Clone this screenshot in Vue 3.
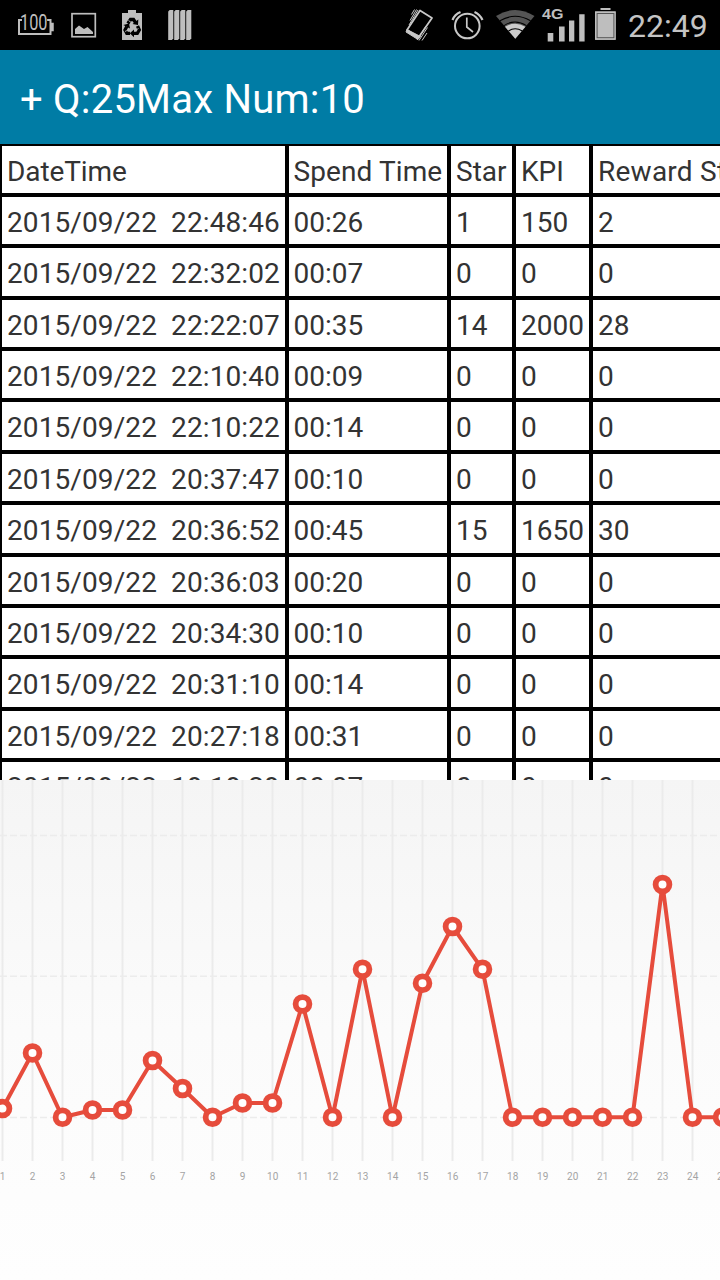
<script setup>
const headers = ['DateTime', 'Spend Time', 'Star', 'KPI', 'Reward Star']
const rows = [
  ['2015/09/22  22:48:46', '00:26', '1', '150', '2'],
  ['2015/09/22  22:32:02', '00:07', '0', '0', '0'],
  ['2015/09/22  22:22:07', '00:35', '14', '2000', '28'],
  ['2015/09/22  22:10:40', '00:09', '0', '0', '0'],
  ['2015/09/22  22:10:22', '00:14', '0', '0', '0'],
  ['2015/09/22  20:37:47', '00:10', '0', '0', '0'],
  ['2015/09/22  20:36:52', '00:45', '15', '1650', '30'],
  ['2015/09/22  20:36:03', '00:20', '0', '0', '0'],
  ['2015/09/22  20:34:30', '00:10', '0', '0', '0'],
  ['2015/09/22  20:31:10', '00:14', '0', '0', '0'],
  ['2015/09/22  20:27:18', '00:31', '0', '0', '0'],
  ['2015/09/22  19:19:29', '00:07', '0', '0', '0'],
]
const levels = [328.5, 273, 337.3, 330, 330, 280.5, 308.5, 337.3, 323, 323, 224, 337.3, 189.3, 337.3, 203.3, 146.5, 189.3, 337.3, 337.3, 337.3, 337.3, 337.3, 104.5, 337.3, 337.3]
const points = levels.map((y, i) => ({ x: 2.5 + i * 30, y, label: i + 1 }))
const line = points.map((p) => `${p.x},${p.y}`).join(' ')
</script>

<template>
  <div class="screen">
    <header class="status">
      <svg class="icons" width="610" height="50" viewBox="0 0 610 50">
        <g fill="none" stroke="#bebebe">
          <path d="M22 20H19V34H50.5V20H47" stroke-width="2" />
          <path d="M51 23.5h2v7h-2" stroke-width="1.5" fill="#bebebe" />
        </g>
        <text x="20" y="30" class="hundred" textLength="27.5" lengthAdjust="spacingAndGlyphs">100</text>
        <rect x="72" y="13.7" width="23.3" height="23" fill="none" stroke="#bebebe" stroke-width="1.7" />
        <path d="M75 34V29L79 25.5 84 29 87.5 27 93 32V34Z" fill="#bebebe" />
        <path d="M122 13H128V10H136V13H142V40H122Z" fill="#bebebe" />
        <g fill="none" stroke="#000" stroke-width="3.3">
          <path d="M127.8 23.5 130.5 19.5H133.5L135.5 22.5" />
          <path d="M137.5 26 139.3 30 137.3 33.3H133" />
          <path d="M130 33.3H126.8L125 30 126.8 26.5" />
        </g>
        <path d="M132.5 24 138 25 138.3 19.5ZM134 29.5V37.3L129.8 33.3ZM123.3 25 129 23.6 130 28.5Z" fill="#000" />
        <path d="M128.5 20.5 131 22.3M138.5 28.5 135.8 30M125 31.5 128 30" stroke="#bebebe" stroke-width=".9" />
        <g fill="#bebebe">
          <path v-for="n in 4" :key="n" :d="`M${162.2 + n * 6} 11.5l1.5-1.5h3.6V38.5l-1.4 1.5h-3.7Z`" />
        </g>
        <g fill="none" stroke="#c8c8c8" stroke-linejoin="round">
          <path d="M420 10.5 432 18 418.5 37.5 407 30Z" stroke-width="1.8" />
          <path d="M407 29.5 420.5 36.5 418 39.5 406 32Z" fill="#c8c8c8" stroke-width="1" />
          <path d="M410 20.5 416.5 9.5M411.5 14.5 414.5 9.5M409 25 418 10M419 40.5 427.5 27.5M422 40.5 427 33M417 40 426 26" stroke-width="1" />
        </g>
        <g fill="none" stroke="#c8c8c8">
          <circle cx="467.3" cy="26" r="12.3" stroke-width="2" />
          <path d="M466.8 17.5V27L473 32" stroke-width="1.7" />
          <path d="M452.5 20Q454.5 14.5 460.5 12M474.5 12Q480 14.5 482.5 20" stroke-width="2.2" />
        </g>
        <path d="M496 16Q515 4 534.5 16L515.3 38.8Z" fill="#555" />
        <path d="M505 26.8Q515 20.8 525.4 26.8L515.3 38.8Z" fill="#ccc" />
        <g fill="none" stroke="#000" stroke-width="1.1">
          <path d="M500 20.8Q515 11.8 530.5 20.8M504 25.6Q515 18.4 526.5 25.6M508.5 31Q515 26.4 522.3 31" />
        </g>
        <text x="542" y="19" class="net" textLength="21.5" lengthAdjust="spacingAndGlyphs">4G</text>
        <g fill="#bebebe">
          <path d="M547.7 33H553.3V41.5H547.7ZM559 26.5H564.6V41.5H559ZM569 20.5H574.3V41.5H569ZM579.2 14.3H584.6V41.5H579.2Z" />
          <path d="M600.5 8H610.5V10H600.5Z" />
        </g>
        <rect x="595.5" y="11.8" width="19.8" height="27.6" fill="#bebebe" stroke="#bebebe" stroke-width="1" />
        <rect x="597.1" y="13.5" width="16.8" height="24.2" fill="none" stroke="#555" stroke-width="1" />
      </svg>
      <span class="clock">22:49</span>
    </header>
    <div class="title">+ Q:25Max Num:10</div>
    <div class="table-view">
      <div class="row head">
        <div v-for="h in headers" :key="h" class="cell">{{ h }}</div>
      </div>
      <div v-for="(row, r) in rows" :key="r" class="row">
        <div v-for="(c, i) in row" :key="i" class="cell">{{ c }}</div>
      </div>
    </div>
    <div class="chart">
      <svg width="720" height="500" viewBox="0 0 720 500">
        <path v-for="p in points" :key="'v' + p.label" :d="`M${p.x} 0V381`" class="vline" />
        <path v-for="y in [55.5, 196.3, 337.5]" :key="y" :d="`M0 ${y}H720`" class="hline" />
        <polyline :points="line" class="series" />
        <circle v-for="p in points" :key="'c' + p.label" :cx="p.x" :cy="p.y" r="6.9" class="dot" />
        <text v-for="p in points" :key="'t' + p.label" :x="p.x + 0.2" y="399.6" class="tick">{{ p.label }}</text>
      </svg>
    </div>
  </div>
</template>

<style scoped>
.screen {
  width: 720px;
  height: 1280px;
  overflow: hidden;
  display: flex;
  flex-direction: column;
  background: #fff;
  font-family: Roboto, "Liberation Sans", sans-serif;
}
.status {
  height: 50px;
  flex: none;
  display: flex;
  background: #000;
}
.icons {
  flex: none;
  overflow: visible;
}
.hundred {
  font-size: 22px;
  fill: #bebebe;
  stroke: #000;
  stroke-width: 1.2px;
  paint-order: stroke;
}
.net {
  font: bold 15px "Liberation Sans", sans-serif;
  fill: #bebebe;
}
.clock {
  padding-left: 18px;
  font-size: 32px;
  line-height: 52px;
  color: #c4c4c4;
}
.title {
  height: 94px;
  flex: none;
  box-sizing: border-box;
  padding-left: 20px;
  background: #007ca5;
  color: #fff;
  font-size: 40px;
  line-height: 100px;
  letter-spacing: 0.22px;
  white-space: pre;
}
.table-view {
  height: 636px;
  flex: none;
  overflow: hidden;
  background: #fff;
}
.row {
  display: grid;
  grid-template-columns: 287px 162px 65px 77px 180px;
  height: 51.36px;
}
.row.head {
  height: 51px;
}
.cell {
  box-sizing: border-box;
  border: 2px solid #000;
  padding-left: 5px;
  color: #333;
  font-size: 28px;
  line-height: 52px;
  white-space: pre;
  overflow: hidden;
}
.cell:first-child {
  letter-spacing: 0.1px;
}
.row.head .cell:first-child {
  letter-spacing: -0.1px;
}
.cell:nth-child(2) {
  padding-left: 4.5px;
}
.row.head .cell:nth-child(2) {
  letter-spacing: 0.1px;
}
.row.head .cell:last-child {
  letter-spacing: 0.25px;
}
.chart {
  height: 500px;
  flex: none;
  background: linear-gradient(#f5f5f5, #fbfbfb 50%, #fefefe);
}
.chart svg {
  display: block;
}
.vline {
  stroke: #ebebeb;
  stroke-width: 2;
}
.hline {
  stroke: #ececec;
  stroke-width: 1.5;
  stroke-dasharray: 7 3;
}
.series {
  fill: none;
  stroke: #e64c3c;
  stroke-width: 4;
  stroke-linejoin: round;
}
.dot {
  fill: #fff;
  stroke: #e64c3c;
  stroke-width: 5.8;
}
.tick {
  font-size: 10px;
  letter-spacing: 0.15px;
  fill: #a4a4a4;
  text-anchor: middle;
}
</style>
